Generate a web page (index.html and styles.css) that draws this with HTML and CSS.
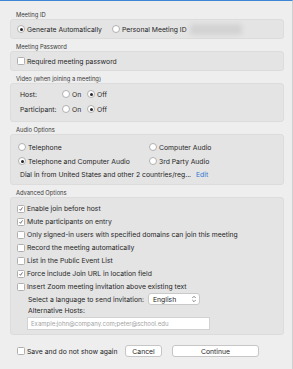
FILE: index.html
```html
<!DOCTYPE html>
<html lang="en">
<head>
    <meta charset="UTF-8">
    <meta name="viewport" content="width=device-width, initial-scale=1.0">
    <title>Schedule Meeting - Options</title>
    <link rel="stylesheet" href="styles.css">
</head>
<body>
    <div class="window">
        <div class="section-label">Meeting ID</div>
        <div class="group group-single">
            <label class="opt"><span class="radio checked"></span>Generate Automatically</label>
            <label class="opt opt-personal"><span class="radio"></span>Personal Meeting ID<span class="blurred"></span></label>
        </div>

        <div class="section-label">Meeting Password</div>
        <div class="group group-single">
            <label class="opt"><span class="check"></span>Required meeting password</label>
        </div>

        <div class="section-label">Video (when joining a meeting)</div>
        <div class="group group-video">
            <div class="video-row">
                <span class="video-name">Host:</span>
                <label class="opt opt-on"><span class="radio"></span>On</label>
                <label class="opt"><span class="radio checked"></span>Off</label>
            </div>
            <div class="video-row">
                <span class="video-name">Participant:</span>
                <label class="opt opt-on"><span class="radio"></span>On</label>
                <label class="opt"><span class="radio checked"></span>Off</label>
            </div>
        </div>

        <div class="section-label">Audio Options</div>
        <div class="group group-audio">
            <div class="audio-grid">
                <label class="opt"><span class="radio"></span>Telephone</label>
                <label class="opt"><span class="radio"></span>Computer Audio</label>
                <label class="opt"><span class="radio checked"></span>Telephone and Computer Audio</label>
                <label class="opt"><span class="radio"></span>3rd Party Audio</label>
            </div>
            <div class="dial-row">Dial in from United States and other 2 countries/reg... <a href="#" class="edit-link">Edit</a></div>
        </div>

        <div class="section-label">Advanced Options</div>
        <div class="group group-advanced">
            <label class="opt adv-row"><span class="check checked"><svg viewBox="0 0 8 8"><path d="M2 4.2 L3.4 5.8 L6 1.8" fill="none" stroke="#2b2b2b" stroke-width="0.9"/></svg></span>Enable join before host</label>
            <label class="opt adv-row"><span class="check checked"><svg viewBox="0 0 8 8"><path d="M2 4.2 L3.4 5.8 L6 1.8" fill="none" stroke="#2b2b2b" stroke-width="0.9"/></svg></span>Mute participants on entry</label>
            <label class="opt adv-row"><span class="check"></span>Only signed-in users with specified domains can join this meeting</label>
            <label class="opt adv-row"><span class="check"></span>Record the meeting automatically</label>
            <label class="opt adv-row"><span class="check"></span>List in the Public Event List</label>
            <label class="opt adv-row"><span class="check checked"><svg viewBox="0 0 8 8"><path d="M2 4.2 L3.4 5.8 L6 1.8" fill="none" stroke="#2b2b2b" stroke-width="0.9"/></svg></span>Force include Join URL in location field</label>
            <label class="opt adv-row"><span class="check"></span>Insert Zoom meeting invitation above existing text</label>
            <div class="lang-row">
                <span class="lang-label">Select a language to send invitation:</span>
                <div class="select-box">
                    <span>English</span>
                    <svg class="updown" viewBox="0 0 6 8"><path d="M1.3 3 L3 1.3 L4.7 3 M1.3 5 L3 6.7 L4.7 5" fill="none" stroke="#555" stroke-width="0.7"/></svg>
                </div>
            </div>
            <div class="alt-label">Alternative Hosts:</div>
            <input type="text" class="alt-input" placeholder="Example:john@company.com;peter@school.edu">
        </div>

        <div class="footer">
            <label class="opt opt-save"><span class="check"></span>Save and do not show again</label>
            <button class="btn btn-cancel">Cancel</button>
            <button class="btn btn-continue">Continue</button>
        </div>
    </div>
</body>
</html>
```

FILE: styles.css
```css
* {
    margin: 0;
    padding: 0;
    box-sizing: border-box;
}

body {
    background-color: #eeeeee;
    font-family: Inter, 'Noto Sans', sans-serif;
    font-size: 6.8px;
    color: #262626;
}

.window {
    width: 293px;
    height: 369px;
    border-top: 1px solid #3d86d4;
    border-right: 1px solid #cfcfcf;
    padding: 6px 8px 0 10px;
}

.section-label {
    height: 8px;
    line-height: 8px;
    margin-top: 4px;
    padding-left: 6px;
    font-size: 5.8px;
    color: #3a3a3a;
}

.group {
    background: #e4e4e4;
    border: 1px solid #dcdcdc;
    border-radius: 3px;
}

.opt {
    display: flex;
    align-items: center;
    white-space: nowrap;
}

.radio {
    width: 8px;
    height: 8px;
    border: 1px solid #b0b0b0;
    border-radius: 50%;
    background: white;
    margin-right: 2px;
    display: flex;
    align-items: center;
    justify-content: center;
    flex-shrink: 0;
}

.radio.checked::after {
    content: "";
    width: 3px;
    height: 3px;
    border-radius: 50%;
    background: #262626;
}

.check {
    width: 8px;
    height: 8px;
    border: 1px solid #b0b0b0;
    border-radius: 1.5px;
    background: white;
    margin-right: 2px;
    flex-shrink: 0;
    display: flex;
}

.check svg {
    width: 100%;
    height: 100%;
}

/* meeting id / password */
.group-single {
    height: 20px;
    padding-left: 6px;
    display: flex;
    align-items: center;
}

.opt-personal {
    margin-left: 10px;
}

.blurred {
    width: 52px;
    height: 11px;
    margin-left: 3px;
    border-radius: 4px;
    background: #d3d3d3;
    filter: blur(2px);
}

/* video */
.group-video {
    padding: 3px 9px 5px;
    display: flex;
    flex-direction: column;
    gap: 1px;
}

.video-row {
    height: 14px;
    display: flex;
    align-items: center;
}

.video-name {
    width: 42px;
}

.opt-on {
    width: 25px;
}

/* audio */
.group-audio {
    padding: 5px 7px 2px;
}

.audio-grid {
    display: grid;
    grid-template-columns: 131px 1fr;
    grid-auto-rows: 14px;
}

.dial-row {
    height: 14px;
    line-height: 14px;
    padding-left: 2px;
    white-space: nowrap;
}

.edit-link {
    color: #2f73d1;
    text-decoration: none;
    margin-left: 3px;
}

/* advanced */
.group-advanced {
    padding: 4px 6px 4px;
}

.adv-row {
    height: 13px;
}

.lang-row {
    height: 12px;
    padding-left: 11px;
    display: flex;
    align-items: center;
}

.lang-label {
    width: 120px;
    white-space: nowrap;
}

.select-box {
    width: 52px;
    height: 12px;
    background: white;
    border: 1px solid #c9c9c9;
    border-radius: 3px;
    padding: 0 2px 0 4px;
    display: flex;
    align-items: center;
    justify-content: space-between;
}

.updown {
    width: 6px;
    height: 8px;
}

.alt-label {
    height: 12px;
    line-height: 12px;
    padding-left: 11px;
}

.alt-input {
    display: block;
    width: 183px;
    height: 13px;
    margin-left: 10px;
    border: 1px solid #d2d2d2;
    background: white;
    padding: 0 3px;
    font-family: Inter, 'Noto Sans', sans-serif;
    font-size: 6px;
    color: #333;
    outline: none;
}

.alt-input::placeholder {
    color: #a3a3a3;
}

/* footer */
.footer {
    margin-top: 10px;
    height: 12px;
    display: flex;
    align-items: center;
}

.opt-save {
    width: 115px;
    padding-left: 7px;
}

.btn {
    height: 12px;
    background: white;
    border: 1px solid #c6c6c6;
    border-radius: 3px;
    font-family: Inter, 'Noto Sans', sans-serif;
    font-size: 6.8px;
    color: #262626;
}

.btn-cancel {
    width: 37px;
}

.btn-continue {
    width: 87px;
    margin-left: 10px;
}
```
